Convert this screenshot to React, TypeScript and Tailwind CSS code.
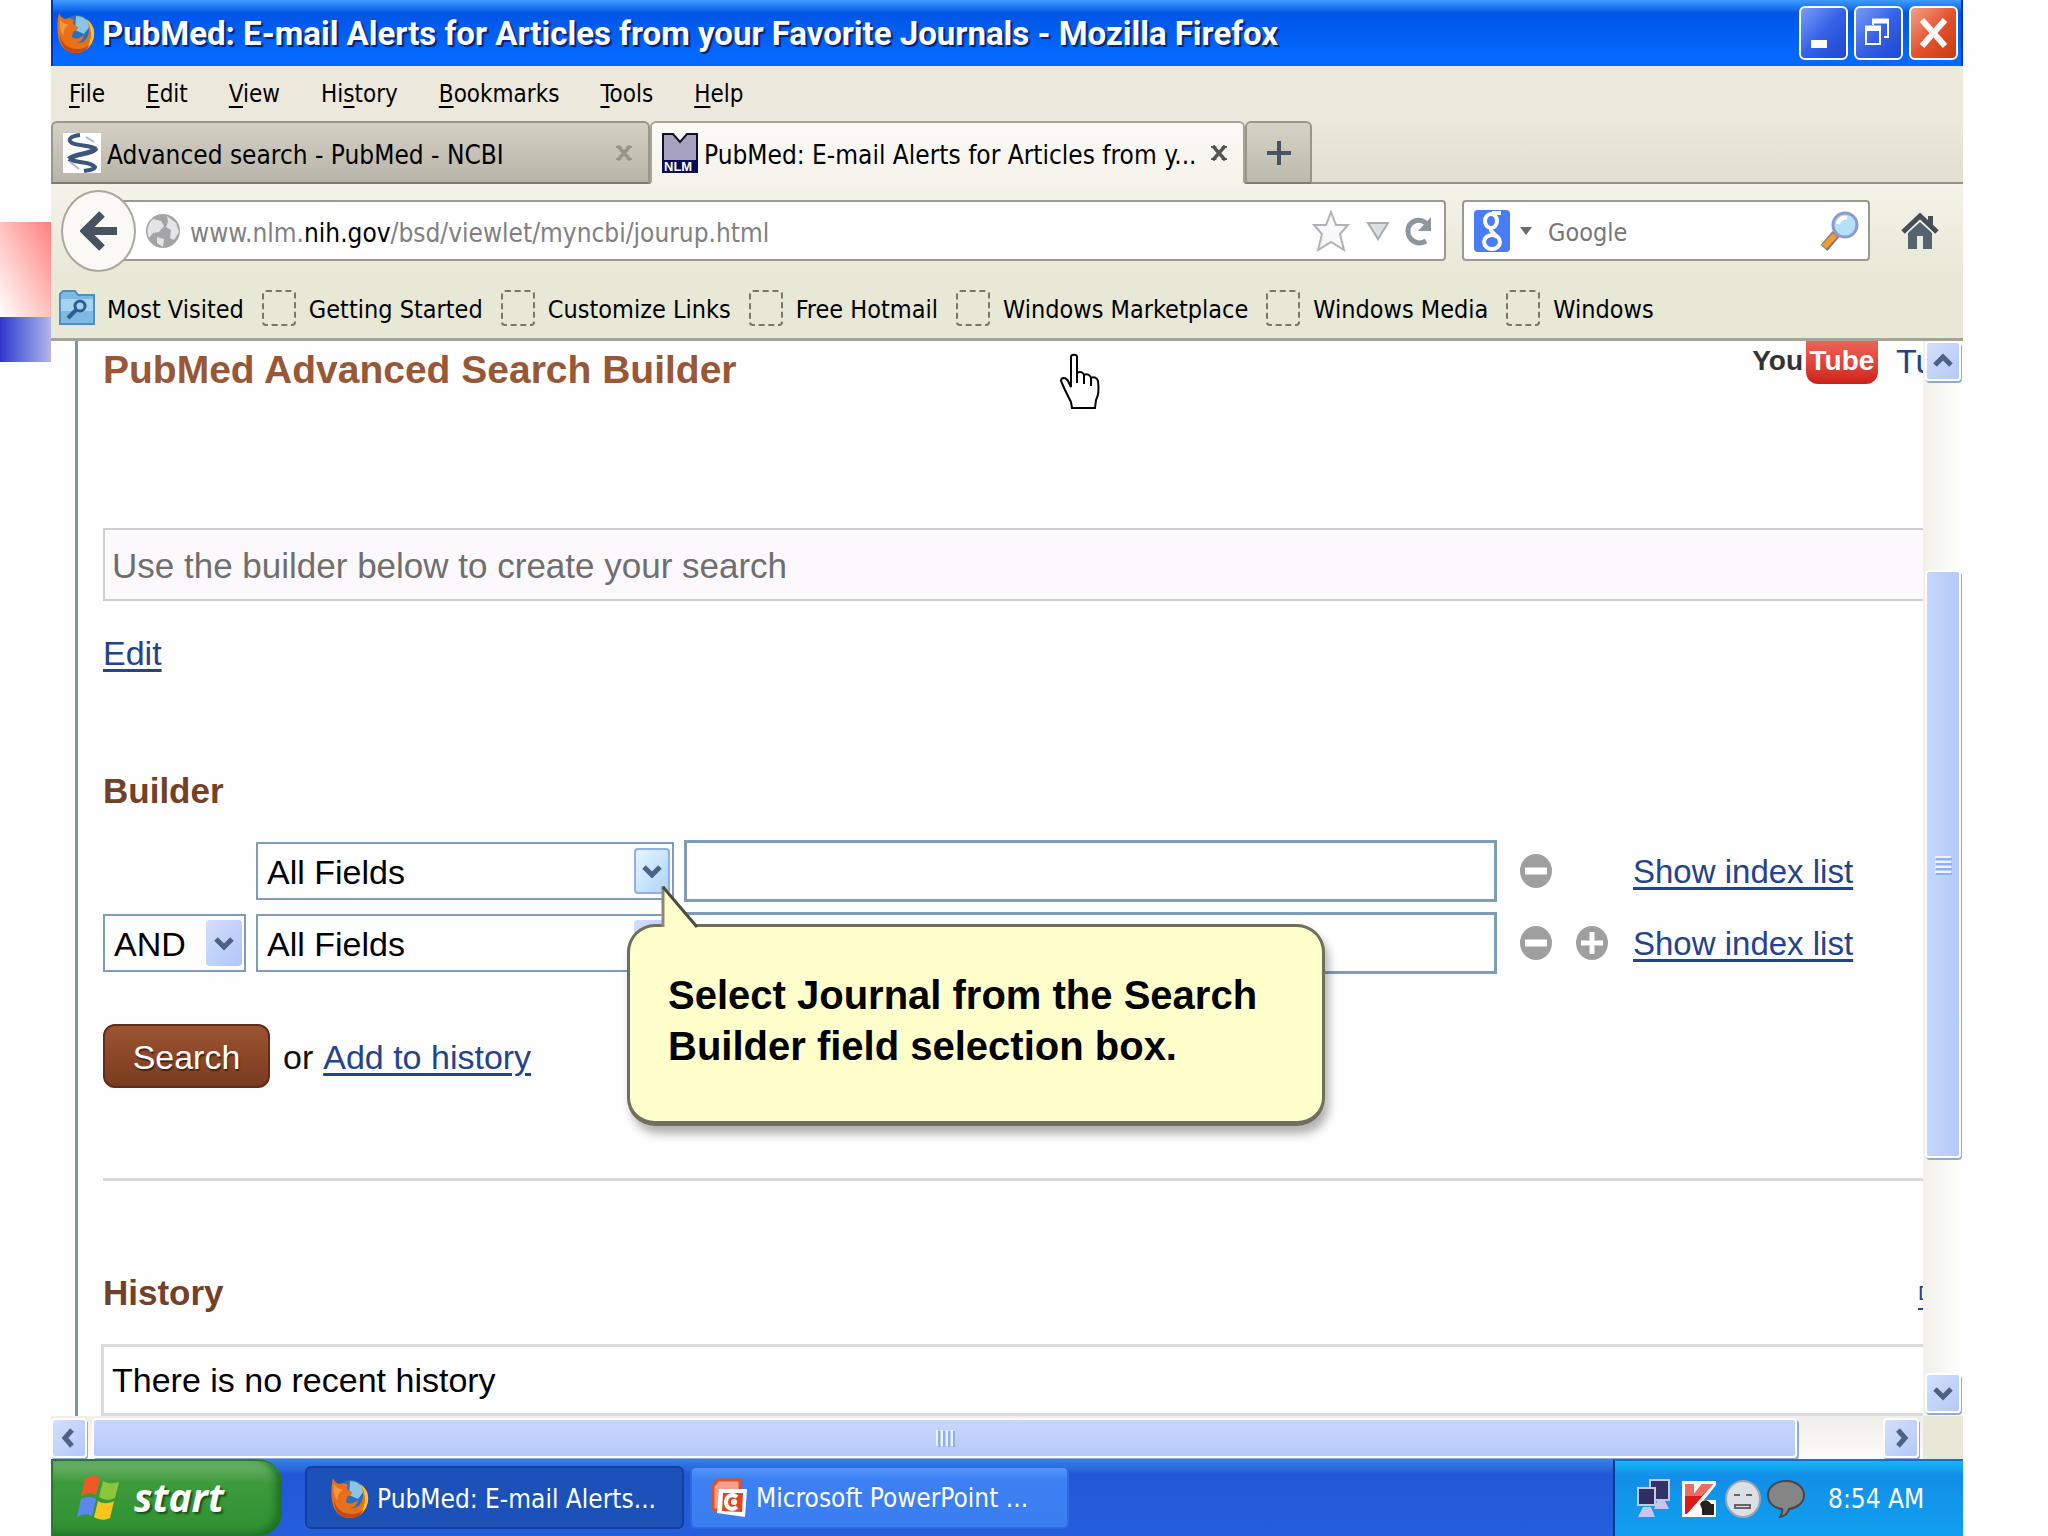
import type { ReactNode } from "react";

const menus = [
  ["", "F", "ile"],
  ["", "E", "dit"],
  ["", "V", "iew"],
  ["Hi", "s", "tory"],
  ["", "B", "ookmarks"],
  ["", "T", "ools"],
  ["", "H", "elp"],
];

const bookmarks = [
  "Getting Started",
  "Customize Links",
  "Free Hotmail",
  "Windows Marketplace",
  "Windows Media",
  "Windows",
];

function FirefoxIcon() {
  return (
    <svg viewBox="0 0 38 40" className="w-[38px] h-10 shrink-0">
      <ellipse cx="20" cy="19" rx="15" ry="17" fill="#2a6fb8" />
      <path d="M19 3c7 0 12 4 14 10l-6 8-9-4 1-14z" fill="#8cc4e6" />
      <path
        d="M2 0c1 3 3 5 6 6 3-1 6-1 9 1-1 2-1 4 0 5l4 2c0 3-3 4-5 5 0 2-1 3-1 5 4 3 9 1 12-2-1 5-4 8-8 8 7 1 13-4 13-13 0-5-1-8-3-11 6 4 9 10 8 17-1 9-8 17-18 17S2 33 1 22C0 14 0 8 2 0z"
        fill="#e8701a"
      />
      <path d="M29 6c6 4 9 10 8 17-1 6-4 11-9 14 4-5 6-10 6-16 0-6-2-11-5-15z" fill="#f9c53a" />
      <path d="M3 22c2 9 9 14 17 14 6 0 10-2 13-5-3 6-8 9-14 9C9 40 3 33 3 22z" fill="#c9480c" />
      <path d="M3 6c2 4 6 5 9 6-4 2-6 6-5 11-4-4-5-11-4-17z" fill="#f6973a" />
    </svg>
  );
}

function Chevron({ dir }: { dir: "up" | "down" | "left" | "right" }) {
  const paths = {
    up: "M3 15l8-8 8 8",
    down: "M3 7l8 8 8-8",
    left: "M14 3l-7 8 7 8",
    right: "M8 3l7 8-7 8",
  };
  return (
    <svg viewBox="0 0 22 22" className="w-[22px] h-[22px]">
      <path d={paths[dir]} fill="none" stroke="#4d6185" strokeWidth="5" />
    </svg>
  );
}

function ScrollButton({ dir, label }: { dir: "up" | "down" | "left" | "right"; label: string }) {
  return (
    <button
      aria-label={label}
      className="w-9 h-10 shrink-0 flex items-center justify-center rounded-sm border-2 border-white bg-gradient-to-br from-[#d3e0fd] to-[#b4c8f8] shadow-[1px_2px_0_#8fabd6]"
    >
      <Chevron dir={dir} />
    </button>
  );
}

function Tab({ title, active, icon }: { title: string; active?: boolean; icon: ReactNode }) {
  return (
    <div
      className={`flex items-center h-[63px] pl-[10px] pr-4 border-2 rounded-t-md ${
        active
          ? "w-[595px] bg-gradient-to-b from-[#fbfaf6] to-[#f5f3ea] border-[#a5a497] border-b-[#f5f3ea]"
          : "w-[599px] bg-gradient-to-b from-[#d4d0c4] to-[#b9b4a9] border-[#99978b] border-b-[#7d7b71]"
      }`}
    >
      {icon}
      <span className="ml-[6px] pt-1 flex-1 whitespace-nowrap">{title}</span>
      <button aria-label="Close tab" className={active ? "text-[#55554f]" : "text-[#96948a]"}>
        <svg viewBox="0 0 18 18" className="w-4 h-4">
          <path d="M2 1l14 16M16 1L2 17" stroke="currentColor" strokeWidth="4" />
          <path d="M0 2h6M12 2h6M0 16h6M12 16h6" stroke="currentColor" strokeWidth="2" />
        </svg>
      </button>
    </div>
  );
}

function FieldSelect({ label, value, hot, width }: { label: string; value: string; hot?: boolean; width: string }) {
  return (
    <div className={`relative h-[58px] shrink-0 ${width}`}>
      <select
        aria-label={label}
        className="appearance-none w-full h-full pl-[9px] pt-[2px] border-2 border-[#7f9db9] bg-white text-[34px] leading-[40px] text-black"
      >
        <option>{value}</option>
      </select>
      <span
        className={`pointer-events-none absolute right-1 top-[6px] bottom-[6px] w-9 flex items-center justify-center rounded-sm ${
          hot
            ? "border-2 border-[#8fb0e8] bg-gradient-to-br from-[#e6f6ff] to-[#aed3fb]"
            : "bg-gradient-to-br from-[#d3defd] to-[#b2c5f8]"
        }`}
      >
        <Chevron dir="down" />
      </span>
    </div>
  );
}

function RoundButton({ plus }: { plus?: boolean }) {
  return (
    <button aria-label={plus ? "Add row" : "Remove row"}>
      <svg viewBox="0 0 34 36" className="w-[34px] h-9">
        <ellipse cx="17" cy="18" rx="16" ry="17" fill="#a09fa0" />
        <path d={plus ? "M6 18h22M17 7v22" : "M6 18h22"} stroke="#fff" strokeWidth={plus ? 5 : 7} />
      </svg>
    </button>
  );
}

function IndexLink() {
  return (
    <a href="#" className="pt-[2px] underline underline-offset-4 text-[#24438c] text-[33px]">
      Show index list
    </a>
  );
}

function TitleBar() {
  return (
    <header className="h-[66px] flex items-center pl-1 pr-[3px] border-x-2 border-[#0030c8] bg-gradient-to-b from-[#3f9bff] from-0% via-[#0055e5] via-20% to-[#0569ff] to-85%">
      <FirefoxIcon />
      <h1 className="ml-[7px] pt-[2px] flex-1 whitespace-nowrap font-['Roboto',sans-serif] font-bold text-[33px] leading-[40px] text-white [text-shadow:2px_2px_1px_#0a1f7a]">
        PubMed: E-mail Alerts for Articles from your Favorite Journals - Mozilla Firefox
      </h1>
      <div className="flex gap-[6px]">
        <button aria-label="Minimize" className="w-[49px] h-[54px] rounded-md border-2 border-white bg-gradient-to-br from-[#7a9cf5] via-[#3560e8] to-[#1f46cf]">
          <svg viewBox="0 0 45 50">
            <path d="M10 32h16v8H10z" fill="#fff" />
          </svg>
        </button>
        <button aria-label="Restore" className="w-[49px] h-[54px] rounded-md border-2 border-white bg-gradient-to-br from-[#7a9cf5] via-[#3560e8] to-[#1f46cf]">
          <svg viewBox="0 0 45 50" fill="none" stroke="#fff">
            <path d="M10 22h14v14H10z" strokeWidth="2" />
            <path d="M9 20h16M16 13h17" strokeWidth="5" />
            <path d="M32 13v16h-4M17 11v6" strokeWidth="2" />
          </svg>
        </button>
        <button aria-label="Close" className="w-[49px] h-[54px] rounded-md border-2 border-white bg-gradient-to-br from-[#f0a088] via-[#e2532f] to-[#c93a10]">
          <svg viewBox="0 0 45 50">
            <path d="M11 12l23 26M34 12L11 38" stroke="#fff" strokeWidth="6" />
          </svg>
        </button>
      </div>
    </header>
  );
}

function TabStrip() {
  return (
    <div className="flex h-[63px] text-[26px] bg-gradient-to-b from-[#ece9dc] to-[#e2dfd0] border-b-2 border-[#94928a]">
      <Tab
        title="Advanced search - PubMed - NCBI"
        icon={
          <svg viewBox="0 0 38 40" className="w-[38px] h-10 bg-white">
            <g fill="none" stroke="#3c5578" strokeWidth="4">
              <path d="M17 2C7 3 4 7 9 10c6 3 20 2 24 6" />
              <path d="M33 15c-2 6-23 6-27 11" strokeWidth="5" />
              <path d="M6 26c4 4 22 2 26 8-1 3-5 3-11 4" />
            </g>
            <path d="M23 4l8 5M7 29l9 7" stroke="#a9bacb" strokeWidth="2" />
          </svg>
        }
      />
      <Tab
        active
        title="PubMed: E-mail Alerts for Articles from y..."
        icon={
          <svg viewBox="0 0 36 40" className="w-9 h-10">
            <path d="M1 1h10l7 8 7-8h10v38H1z" fill="#a6a1bd" stroke="#11102b" strokeWidth="2" />
            <path d="M0 27h36v13H0z" fill="#0b0a52" />
            <text x="2" y="38" fontSize="13" fontWeight="700" fill="#fff" fontFamily="Liberation Sans">
              NLM
            </text>
          </svg>
        }
      />
      <button
        aria-label="Open a new tab"
        className="w-[67px] h-[63px] flex items-center justify-center border-2 border-[#99978b] border-b-[#7d7b71] rounded-t-md bg-gradient-to-b from-[#d6d3c6] to-[#bdb9ae]"
      >
        <svg viewBox="0 0 26 26" className="w-[26px] h-[26px]">
          <path d="M1 13h24M13 1v24" stroke="#48535f" strokeWidth="4" />
        </svg>
      </button>
    </div>
  );
}

function NavBar() {
  return (
    <div className="flex items-center h-[93px] pl-[10px] pr-6 text-[26px]">
      <button
        aria-label="Back"
        className="z-10 w-[75px] h-[82px] shrink-0 flex items-center justify-center rounded-[50%] border-2 border-[#a9a89d] bg-[#faf9f5]"
      >
        <svg viewBox="0 0 38 40" className="w-[38px] h-10">
          <path d="M22 3L5 20l17 17M5 20h32" fill="none" stroke="#47535f" strokeWidth="8" />
        </svg>
      </button>
      <div className="-ml-5 pl-[27px] pr-3 flex-1 h-[61px] flex items-center border-2 border-[#9b9a90] bg-white rounded-r-sm">
        <svg viewBox="0 0 36 36" className="w-9 h-9 shrink-0">
          <circle cx="18" cy="18" r="17" fill="#a4a4a6" />
          <path d="M8 6l8 2 3 5-5 6-6 1-4 5c-3-7-1-15 4-19zM22 3l9 7 3 9-5 8-4-2 1-8-5-3 2-5zM12 24l7 2-1 8-6-4z" fill="#e4e4e6" />
        </svg>
        {/* address is read only, the registered domain is drawn darker */}
        <a href="#" className="ml-[9px] pt-1 flex-1 whitespace-nowrap text-[#808080]">
          www.nlm.<span className="text-black">nih.gov</span>/bsd/viewlet/myncbi/jourup.html
        </a>
        <button aria-label="Bookmark this page">
          <svg viewBox="0 0 38 42" className="w-[38px] h-[42px]">
            <path d="M19 2l5 13h12l-8 9 4 16-13-8-13 8 4-16-8-9h12z" fill="#f8f7f9" stroke="#b3b1b6" strokeWidth="2" />
          </svg>
        </button>
        <svg viewBox="0 0 24 20" className="ml-4 w-6 h-5">
          <path d="M2 2h20L12 18z" fill="#dce0e4" stroke="#a9adb2" strokeWidth="2" />
        </svg>
        <button aria-label="Reload" className="ml-[14px]">
          <svg viewBox="0 0 28 30" className="w-7 h-[30px]">
            <path d="M22 25c-9 5-18-1-18-10S14 1 22 7" fill="none" stroke="#8d959d" strokeWidth="5" />
            <path d="M27 1v14H14z" fill="#8d959d" />
          </svg>
        </button>
      </div>
      <div className="ml-4 w-[408px] h-[61px] flex items-center pl-[10px] pr-2 border-2 border-[#9b9a90] bg-white rounded-sm">
        <svg viewBox="0 0 36 42" className="w-9 h-[42px] shrink-0">
          <rect width="36" height="42" rx="4" fill="#4a7df5" />
          <g fill="none" stroke="#fff" strokeWidth="4">
            <ellipse cx="17" cy="11" rx="6" ry="7" />
            <ellipse cx="18" cy="32" rx="8" ry="7" />
            <path d="M27 3h-9M18 18c-3 3 1 4 5 9" />
          </g>
        </svg>
        <svg viewBox="0 0 12 8" className="ml-[10px] w-3 h-2 shrink-0">
          <path d="M0 0h12L6 8z" fill="#6b6b6b" />
        </svg>
        <input
          aria-label="Search with Google"
          placeholder="Google"
          className="ml-4 pt-1 flex-1 min-w-0 outline-none text-[25px] placeholder:text-[#777]"
        />
        <svg viewBox="0 0 40 42" className="w-10 h-[42px] shrink-0">
          <path d="M16 24L4 38" stroke="#7a7a8c" strokeWidth="9" />
          <path d="M15 25L4 37" stroke="#f39a2d" strokeWidth="6" />
          <circle cx="25" cy="15" r="12" fill="#b5e0fa" stroke="#8d9ccb" strokeWidth="3" />
          <path d="M18 14c1-5 5-7 9-6" stroke="#fff" strokeWidth="4" fill="none" />
        </svg>
      </div>
      <button aria-label="Home" className="ml-[31px]">
        <svg viewBox="0 0 38 38" className="w-[38px] h-[38px]">
          <path d="M2 20L19 4l17 16" fill="none" stroke="#454e58" strokeWidth="5" />
          <path d="M7 21l12-11 12 11v16h-9V24h-6v13H7z" fill="#566270" />
          <path d="M27 4h5v9l-5-4z" fill="#454e58" />
        </svg>
      </button>
    </div>
  );
}

function BookmarksBar() {
  return (
    <div className="flex items-center h-[61px] pl-[7px] gap-[18px] text-[25px]">
      <a href="#" className="flex items-center">
        <svg viewBox="0 0 38 36" className="w-[38px] h-9">
          <path d="M2 4l3-3h12l3 4h16v29H2z" fill="#7fb9e2" stroke="#4d8fc4" strokeWidth="2" />
          <path d="M3 9h32v12H3z" fill="#a5d3f1" />
          <circle cx="22" cy="16" r="5" fill="none" stroke="#2b5f93" strokeWidth="3" />
          <path d="M18 20l-8 8" stroke="#2b5f93" strokeWidth="4" />
        </svg>
        <span className="ml-[11px] pt-1">Most Visited</span>
      </a>
      {bookmarks.map((b) => (
        <a key={b} href="#" className="flex items-center whitespace-nowrap">
          <span className="w-[34px] h-9 border-2 border-dashed border-[#77776c] rounded-sm" />
          <span className="ml-[13px] pt-1">{b}</span>
        </a>
      ))}
    </div>
  );
}

function Callout() {
  return (
    <div
      role="tooltip"
      className="absolute left-[524px] top-[84px] w-[698px] h-[202px] pl-[38px] pt-[43px] rounded-[28px] border-[3px] border-[#6f6f5e] border-b-[5px] bg-[#ffffcc] shadow-[4px_8px_10px_rgba(0,0,0,0.3)] text-black text-[40px] leading-[51px] font-bold"
    >
      <svg viewBox="0 0 44 46" className="absolute left-[30px] -top-[42px] w-11 h-[46px]">
        <path d="M4 46V2l34 41v3z" fill="#ffffcc" />
        <path d="M3 42V1" stroke="#8a8a72" strokeWidth="3" />
        <path d="M3 2l34 40" stroke="#4c4c40" strokeWidth="3" />
      </svg>
      Select Journal from the Search
      <br />
      Builder field selection box.
    </div>
  );
}

function Page() {
  return (
    <main className="relative flex-1 min-w-0 overflow-hidden bg-[#fefefe] pl-6 font-['Liberation_Sans',sans-serif] text-[34px] leading-[40px] text-[#111]">
      <div className="h-full border-l-[3px] border-[#7b97b0] pl-[25px]">
        <div className="h-[58px] flex items-center justify-between">
          <h2 className="text-[39px] font-bold text-[#985735]">PubMed Advanced Search Builder</h2>
          <div className="flex self-start items-start whitespace-nowrap">
            <a href="#" aria-label="YouTube" className="flex font-bold text-[28px]">
              <span className="text-[#333]">You</span>
              <span className="ml-[3px] w-[72px] h-[43px] text-center text-white rounded-b-xl bg-gradient-to-b from-[#ef6257] via-[#e0463c] to-[#cc1f16]">
                Tube
              </span>
            </a>
            <a href="#" className="ml-[18px] w-[27px] overflow-hidden text-[#24438c]">Tu</a>
          </div>
        </div>

        <div className="mt-[129px] h-[73px] flex items-center pl-[7px] pt-[2px] border-2 border-r-0 border-[#cfcdd0] bg-[#fbf9fc] text-[35px] text-[#6f6f6f]">
          Use the builder below to create your search
        </div>
        <a href="#" className="mt-8 inline-block align-top underline underline-offset-4 text-[#24438c]">Edit</a>

        <h3 className="mt-[98px] text-[35px] font-bold text-[#724128]">Builder</h3>
        <div className="relative mt-[29px] flex flex-col gap-[10px]">
          <div className="flex items-center gap-[10px]">
            <span className="w-[143px] shrink-0" />
            <FieldSelect label="Field 1" value="All Fields" width="w-[418px]" hot />
            <input aria-label="Term 1" className="flex-1 min-w-0 h-[62px] px-2 border-[3px] border-[#7f9db9] bg-white" />
            <div className="w-[416px] pl-3 flex items-center">
              <RoundButton />
              <span className="ml-[80px] flex"><IndexLink /></span>
            </div>
          </div>
          <div className="flex items-center gap-[10px]">
            <FieldSelect label="Operator" value="AND" width="w-[143px]" />
            <FieldSelect label="Field 2" value="All Fields" width="w-[418px]" />
            <input aria-label="Term 2" className="flex-1 min-w-0 h-[62px] px-2 border-[3px] border-[#7f9db9] bg-white" />
            <div className="w-[416px] pl-3 flex items-center">
              <RoundButton />
              <span className="ml-[22px] mr-6 flex"><RoundButton plus /></span>
              <IndexLink />
            </div>
          </div>
          <Callout />
        </div>
        <div className="mt-[50px] flex items-center">
          <button className="w-[167px] h-16 pt-[2px] rounded-xl border-2 border-[#5f2d18] bg-gradient-to-b from-[#9c5532] to-[#7b3a1f] text-white [text-shadow:1px_2px_1px_#4a2010]">
            Search
          </button>
          <span className="ml-[13px] pt-[2px]">or</span>
          <a href="#" className="ml-[10px] pt-[2px] underline underline-offset-4 text-[#24438c]">Add to history</a>
        </div>

        <hr className="mt-[90px] border-t-[3px] border-[#dad9da]" />

        <div className="mt-[92px] flex items-center justify-between">
          <h3 className="text-[35px] font-bold text-[#724128]">History</h3>
          <a href="#" aria-label="Download history" className="w-[5px] overflow-hidden underline underline-offset-8 text-[21px] text-[#24438c]">D</a>
        </div>
        <div className="mt-[31px] -ml-[2px] h-[72px] flex items-center pl-[8px] border-[3px] border-r-0 border-[#dcdbdc] bg-white text-black">
          There is no recent history
        </div>
      </div>
      <svg viewBox="0 0 42 56" className="absolute left-[1009px] top-3 w-[42px] h-14">
        <path
          d="M11 4c0-3 6-3 6 0v16c3-2 6-1 7 2 3-2 6 0 7 3 3-2 6 0 7 3 1 8 1 14-2 19l-1 8H12l-1-6-6-12-4-9c0-4 5-4 7 0l3 6z"
          fill="#fff"
          stroke="#000"
          strokeWidth="2"
        />
        <path d="M17 19v11M24 22v9M31 25v8" stroke="#000" strokeWidth="2" />
      </svg>
    </main>
  );
}

function TaskBar() {
  return (
    <footer className="h-[77px] flex items-stretch text-[26px] bg-gradient-to-b from-[#3a80e8] from-0% via-[#2258d6] via-20% to-[#245edc] to-90% text-white">
      <button className="w-[231px] pl-[23px] flex items-center gap-3 rounded-r-[24px] border-t-2 border-l-2 border-[#2a7a35] bg-gradient-to-b from-[#6fb46d] via-[#3c9a3b] via-30% to-[#2f9230] shadow-[inset_-6px_-3px_8px_#1f6d25]">
        <svg viewBox="0 0 46 48" className="w-[46px] h-12">
          <path d="M9 4c5-4 10-4 15-1l-4 17c-5-3-10-2-15 1z" fill="#ef5a24" />
          <path d="M27 6c5 3 10 3 16 1l-4 16c-6 3-11 2-16-1z" fill="#8cc63a" />
          <path d="M5 24c5-3 10-3 15 0l-4 17c-5-3-10-2-15 1z" fill="#5b87f2" />
          <path d="M22 26c5 3 10 3 16 0l-4 17c-6 3-11 2-16-1z" fill="#f5c51d" />
        </svg>
        <span className="pb-[3px] font-['Open_Sans',sans-serif] font-bold italic text-[39px] leading-[40px] [text-shadow:2px_2px_2px_#1b4d1e]">start</span>
      </button>
      <div className="flex-1 flex items-center gap-[6px] pl-[23px]">
        <button className="w-[379px] h-[63px] flex items-center pl-[24px] whitespace-nowrap rounded-md border-2 border-[#153f9c] bg-[#1c51b9]">
          <FirefoxIcon />
          <span className="ml-2 pt-[2px]">PubMed: E-mail Alerts...</span>
        </button>
        <button className="w-[379px] h-[63px] flex items-center pl-[18px] whitespace-nowrap rounded-md border-2 border-[#2e69e0] bg-gradient-to-b from-[#5796fa] via-[#3c80f3] via-20% to-[#3b7ef2]">
          <svg viewBox="0 0 38 40" className="w-[38px] h-10">
            <path d="M3 8l5-6h22v30H3z" fill="#f0a08c" stroke="#e2501f" strokeWidth="3" />
            <path d="M9 11h28l-2 28-28-4z" fill="#fff" />
            <path d="M13 15h20l-1 19-20-1z" fill="#e2441c" />
            <path d="M27 19c-5-4-11-1-11 5s6 9 11 5" fill="none" stroke="#fff" strokeWidth="4" />
            <circle cx="24" cy="24" r="3" fill="#fff" />
          </svg>
          <span className="ml-2">Microsoft PowerPoint ...</span>
        </button>
      </div>
      <div className="w-[350px] flex items-center pl-[22px] border-l-2 border-t-2 border-l-[#0b3a8a] border-t-[#0f6fd6] bg-gradient-to-b from-[#19b4f5] from-0% via-[#128ee8] via-20% to-[#10a0ef]">
        <svg viewBox="0 0 34 40" className="w-[34px] h-10">
          <path d="M13 1h19v20H13z" fill="#33336b" stroke="#c8c8e6" strokeWidth="2" />
          <path d="M20 22h8l4 8H17z" fill="#c9c4f2" />
          <path d="M1 9h17v17H1z" fill="#2e2e63" stroke="#c8c8e6" strokeWidth="2" />
          <path d="M6 28h8l4 10H1z" fill="#c9c4f2" />
        </svg>
        <svg viewBox="0 0 34 36" className="ml-[11px] w-[34px] h-9">
          <path d="M0 0h34v4L22 19h12v17H0z" fill="#fff" />
          <path d="M3 3h9v10l8-10h11L5 33H3z" fill="#dc1a1a" />
          <path d="M3 3h9v10l8-10h11L20 15H3z" fill="#ee6a64" />
          <path d="M18 23c3-5 8-5 11 0h3v11H20v-6z" fill="#222" />
        </svg>
        <svg viewBox="0 0 36 38" className="ml-[9px] w-9 h-[38px]">
          <ellipse cx="18" cy="19" rx="17" ry="18" fill="#dcdfe3" stroke="#9aa5b3" strokeWidth="2" />
          <path d="M9 15h6M21 15h6M10 25h15v3H10z" stroke="#666" strokeWidth="2" fill="none" />
        </svg>
        <svg viewBox="0 0 38 38" className="ml-[6px] w-[38px] h-[38px]">
          <path d="M19 1c10 0 18 6 18 14S30 28 22 29c-1 4-4 7-9 8 2-3 3-5 2-8C7 28 1 23 1 15S9 1 19 1z" fill="#858585" stroke="#474747" strokeWidth="2" />
        </svg>
        <time className="ml-[23px] whitespace-nowrap">8:54 AM</time>
      </div>
    </footer>
  );
}

export default function App() {
  return (
    <div className="min-h-screen flex bg-[#fefefe] overflow-hidden font-['DejaVu_Sans_Condensed','Roboto',sans-serif] text-[24px] leading-[32px] text-black">
      <aside className="w-[51px] shrink-0 pt-[222px]">
        <div className="h-[95px] bg-gradient-to-bl from-[#ff7f7f] to-white" />
        <div className="h-[45px] bg-gradient-to-r from-[#3333cc] to-[#b5b5e8]" />
      </aside>
      <div className="flex-1 min-w-0 mr-[85px] flex flex-col">
        <TitleBar />
        <nav className="h-[55px] flex items-center gap-[41px] pl-[18px] bg-[#ece9dc]">
          {menus.map(([pre, key, post]) => (
            <a key={pre + key} href="#">
              {pre}
              <span className="underline underline-offset-4">{key}</span>
              {post}
            </a>
          ))}
        </nav>
        <TabStrip />
        <div className="border-b-[3px] border-[#a5a497] bg-gradient-to-b from-[#f5f3ea] to-[#e7e8d6] to-60%">
          <NavBar />
          <BookmarksBar />
        </div>
        <div className="flex-1 flex">
          <Page />
          <div className="w-10 shrink-0 pb-[3px] flex flex-col items-center bg-gradient-to-r from-[#f1f0ea] to-[#fefefc]">
            <ScrollButton dir="up" label="Scroll up" />
            <div className="mt-[189px] h-[588px] w-9 flex flex-col items-center justify-center gap-[3px] rounded-sm border-2 border-white bg-gradient-to-r from-[#c8d6fc] to-[#b3c9fb] shadow-[1px_2px_0_#8fabd6]">
              <span className="w-4 h-[2px] bg-[#eef4fe] shadow-[1px_2px_0_#8cb0f8]" />
              <span className="w-4 h-[2px] bg-[#eef4fe] shadow-[1px_2px_0_#8cb0f8]" />
              <span className="w-4 h-[2px] bg-[#eef4fe] shadow-[1px_2px_0_#8cb0f8]" />
              <span className="w-4 h-[2px] bg-[#eef4fe] shadow-[1px_2px_0_#8cb0f8]" />
            </div>
            <span className="flex-1" />
            <ScrollButton dir="down" label="Scroll down" />
          </div>
        </div>
        <div className="h-[43px] shrink-0 flex items-center bg-gradient-to-b from-[#f0eeea] to-[#fdfcf9]">
          <ScrollButton dir="left" label="Scroll left" />
          <div className="ml-[5px] mr-[86px] flex-1 h-10 flex items-center justify-center gap-[3px] rounded-sm border-2 border-white bg-gradient-to-b from-[#c9d7fd] to-[#b6c9f8] shadow-[2px_2px_0_#8fabd6]">
            <span className="w-[2px] h-4 bg-[#eef4fe] shadow-[2px_1px_0_#8cb0f8]" />
            <span className="w-[2px] h-4 bg-[#eef4fe] shadow-[2px_1px_0_#8cb0f8]" />
            <span className="w-[2px] h-4 bg-[#eef4fe] shadow-[2px_1px_0_#8cb0f8]" />
            <span className="w-[2px] h-4 bg-[#eef4fe] shadow-[2px_1px_0_#8cb0f8]" />
          </div>
          <ScrollButton dir="right" label="Scroll right" />
          <span className="ml-1 w-10 h-full bg-[#e8e8d6]" />
        </div>
        <TaskBar />
      </div>
    </div>
  );
}
